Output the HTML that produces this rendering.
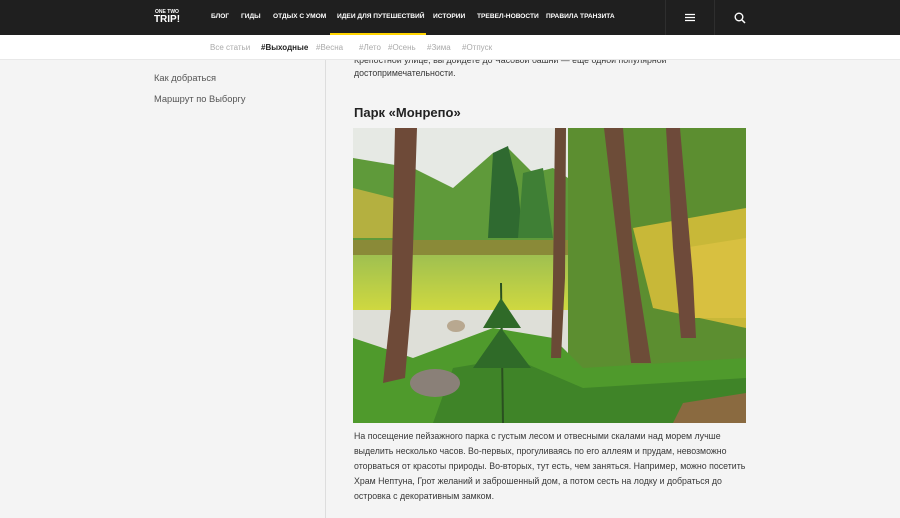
<!DOCTYPE html>
<html><head><meta charset="utf-8"><style>
*{margin:0;padding:0;box-sizing:border-box}
body{width:900px;height:518px;overflow:hidden;background:#f4f4f4;font-family:"Liberation Sans","DejaVu Sans",sans-serif;position:relative}
.hdr{position:absolute;left:0;top:0;width:900px;height:35px;background:#1f1f1f}
.logo{position:absolute;left:153px;top:5px;color:#fff;text-align:center;width:28px}
.logo .a{font-size:5px;font-weight:bold;line-height:6px;margin-top:4px}
.logo .b{font-size:10px;font-weight:bold;line-height:10px}
.nav a{position:absolute;top:13px;color:#fff;font-size:6.6px;font-weight:bold;text-decoration:none;white-space:nowrap}
.uline{position:absolute;left:330px;top:33px;width:96px;height:2px;background:#ffd400}
.sep{position:absolute;top:0;width:1px;height:35px;background:#2e2e2e}
.sub{position:absolute;left:0;top:35px;width:900px;height:25px;background:#fff;border-bottom:1px solid #e8e8e8}
.sub span{position:absolute;top:8px;font-size:8px;color:#aaa;white-space:nowrap}
.side{position:absolute;left:154px;font-size:9.3px;color:#555}
.vl{position:absolute;left:325px;top:60px;width:1px;height:458px;background:#ddd}
.p{position:absolute;left:354px;font-size:8.8px;color:#383838;line-height:15px;white-space:nowrap}
h2{position:absolute;left:354px;top:105px;font-size:13px;font-weight:bold;color:#222}
</style></head><body>
<div class="hdr">
<div class="logo"><div class="a">ONE TWO</div><div class="b">TRIP!</div></div>
<div class="nav">
<a style="left:211px">БЛОГ</a><a style="left:241px">ГИДЫ</a><a style="left:273px">ОТДЫХ С УМОМ</a><a style="left:337px">ИДЕИ ДЛЯ ПУТЕШЕСТВИЙ</a><a style="left:433px">ИСТОРИИ</a><a style="left:477px">ТРЕВЕЛ-НОВОСТИ</a><a style="left:546px">ПРАВИЛА ТРАНЗИТА</a>
</div>
<div class="uline"></div>
<div class="sep" style="left:665px"></div><div class="sep" style="left:714px"></div>
<svg style="position:absolute;left:685px;top:13px" width="10" height="9"><path d="M0 1.5H10M0 4.5H10M0 7.5H10" stroke="#fff" stroke-width="1.3"/></svg>
<svg style="position:absolute;left:734px;top:12px" width="12" height="12"><circle cx="5" cy="5" r="3.8" stroke="#fff" stroke-width="1.4" fill="none"/><path d="M8 8L11 11" stroke="#fff" stroke-width="1.5"/></svg>
</div>
<div class="side" style="top:73px">Как добраться</div>
<div class="side" style="top:94px">Маршрут по Выборгу</div>
<div class="vl"></div>
<div class="p" style="top:54px;line-height:13px">Крепостной улице, вы дойдете до Часовой башни — еще одной популярной<br>достопримечательности.</div>
<div class="sub"><span style="left:210px">Все статьи</span><span style="left:261px;color:#222;font-weight:bold">#Выходные</span><span style="left:316px">#Весна</span><span style="left:359px">#Лето</span><span style="left:388px">#Осень</span><span style="left:427px">#Зима</span><span style="left:462px">#Отпуск</span></div>
<h2>Парк «Монрепо»</h2>
<svg style="position:absolute;left:353px;top:128px" width="393" height="295" viewBox="0 0 393 295">
<defs>
<linearGradient id="g1" x1="0" y1="0" x2="0" y2="1"><stop offset="0" stop-color="#9fc050"/><stop offset="1" stop-color="#cfd840"/></linearGradient>
</defs>
<rect width="393" height="295" fill="#e6e9e4"/>
<path d="M0 30 L60 40 L100 60 L140 25 L155 20 L180 45 L200 40 L230 60 L230 115 L0 115Z" fill="#5f9a3a"/>
<path d="M140 25 L155 18 L165 60 L170 110 L135 110Z" fill="#2f6a30"/>
<path d="M170 45 L190 40 L200 110 L165 110Z" fill="#3f7f35"/>
<path d="M0 60 L40 70 L60 110 L0 110Z" fill="#b4b040"/>
<rect x="0" y="112" width="230" height="15" fill="#8a8a38"/>
<rect x="0" y="127" width="230" height="55" fill="url(#g1)"/>
<rect x="0" y="182" width="230" height="70" fill="#dedfd8"/>
<path d="M215 0 L393 0 L393 295 L215 295Z" fill="#5c8e30"/>
<path d="M280 100 L393 80 L393 200 L300 180Z" fill="#c8b838"/>
<path d="M330 120 L393 110 L393 190 L340 190Z" fill="#d8c040"/>
<path d="M0 210 L60 230 L140 200 L200 210 L230 240 L393 230 L393 295 L0 295Z" fill="#4f9a2c"/>
<path d="M100 240 L160 230 L230 260 L393 250 L393 295 L80 295Z" fill="#3f8428"/>
<ellipse cx="82" cy="255" rx="25" ry="14" fill="#8a8078"/>
<ellipse cx="103" cy="198" rx="9" ry="6" fill="#b8a890"/>
<path d="M330 275 L393 265 L393 295 L320 295Z" fill="#8a6a40"/>
<path d="M42 0 L64 0 L58 180 L52 250 L30 255 L38 180Z" fill="#6e4a38"/>
<path d="M202 0 L213 0 L212 150 L208 230 L198 230 L200 150Z" fill="#6a4a36"/>
<path d="M251 0 L270 0 L280 120 L298 235 L278 235 L265 120Z" fill="#6d4c38"/>
<path d="M313 0 L327 0 L340 150 L343 210 L328 210 L320 120Z" fill="#6e4a3a"/>
<path d="M148 155 L150 295" stroke="#2a5020" stroke-width="2"/>
<path d="M130 200 L148 170 L168 200Z M120 240 L148 200 L178 240Z" fill="#2f6a28"/>
</svg>
<div class="p" style="top:429px">На посещение пейзажного парка с густым лесом и отвесными скалами над морем лучше<br>выделить несколько часов. Во-первых, прогуливаясь по его аллеям и прудам, невозможно<br>оторваться от красоты природы. Во-вторых, тут есть, чем заняться. Например, можно посетить<br>Храм Нептуна, Грот желаний и заброшенный дом, а потом сесть на лодку и добраться до<br>островка с декоративным замком.</div>
</body></html>
